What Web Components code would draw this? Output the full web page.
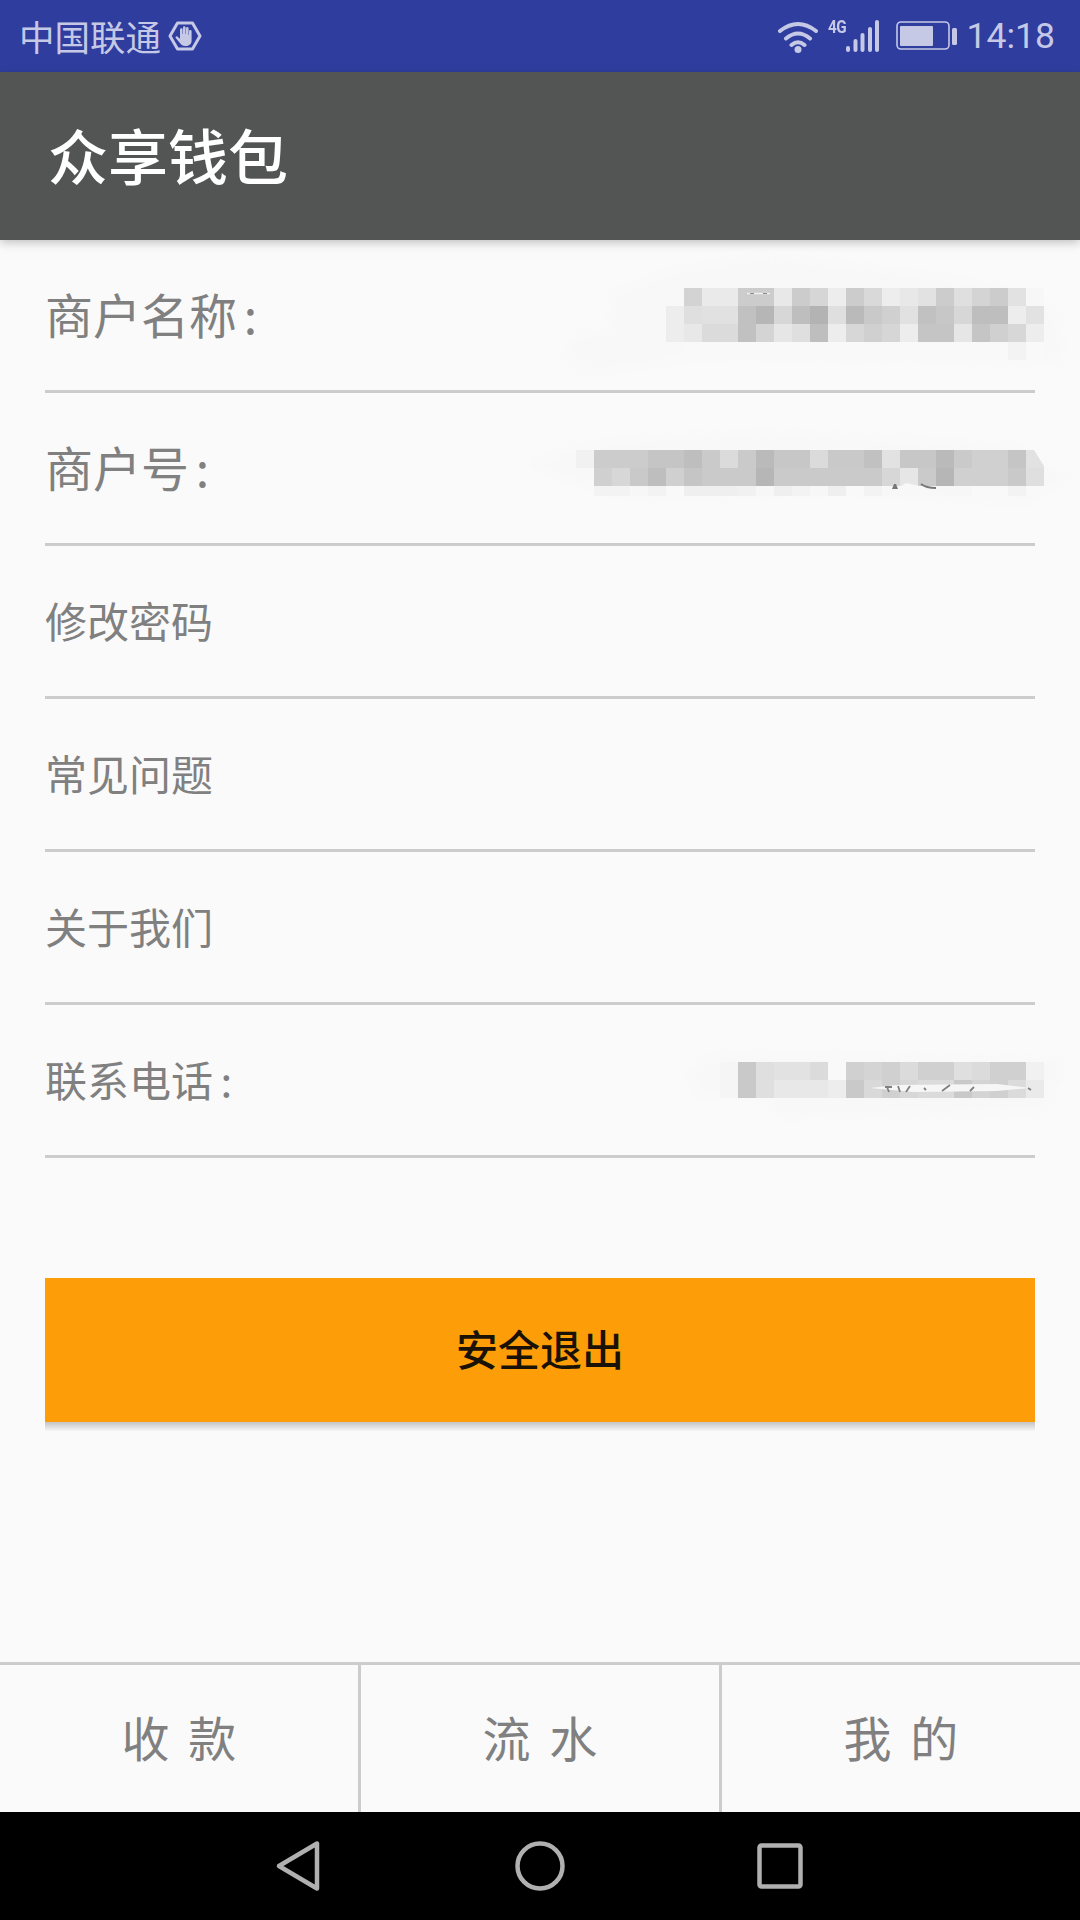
<!DOCTYPE html>
<html lang="zh-CN">
<head>
<meta charset="utf-8">
<title>众享钱包</title>
<style>
  html, body { margin: 0; padding: 0; background: #fafafa; }
  body { font-family: "Noto Sans CJK SC", "Noto Sans", sans-serif; }
</style>
</head>
<body>
<wallet-page>
  <status-bar></status-bar>
  <app-bar>众享钱包</app-bar>
  <info-list>
    <info-row large>
      商户名称 :
      <pixel-blur slot="value" top="48" right="-9" width="378" height="72"
        cells="-- cf e8 e8 c8 c8 e6 c8 d2 eb c8 d6 ec e6 e0 c8 dc d0 c8 df f6/ec dc de de bc b0 d4 b8 ac dc b4 c4 cc de bc c2 d4 b8 b8 ec e0/ec e6 d8 d8 bc d0 e4 dc b8 eb d4 cc d2 ec c0 c0 e4 c0 cc d4 ec/-- f8 f8 f8 f8 f8 f8 f8 f8 f8 f8 f8 f8 f8 f8 f8 f8 f8 f8 f2 f8"
        smear="M8 -18L97 -32L229 -18L318 -5L390 22L397 62L390 75L283 72L33 69L-75 85L-101 69L-92 49L-57 42L-53 5Z">
        <svg slot="marks" viewBox="0 0 378 72" width="378" height="72" style="display:block">
          <path d="M81 5.5L104 5.5" stroke="#f2f2f2" stroke-width="1.4"/>
          <path d="M84 5.5L88 5.5M97 5.5L101 5.5" stroke="#8a8a8a" stroke-width="1"/>
        </svg>
      </pixel-blur>
    </info-row>
    <info-row large>
      商户号 :
      <pixel-blur slot="value" top="57" right="-9" width="468" height="46"
        cells="f0 c8 c8 c8 c0 c0 b8 c6 d8 c6 b4 c2 c2 d8 c4 c4 bc e0 c2 c2 b4 c6 cc cc c0 e0/-- cc d4 c4 b8 cc c0 c6 c6 c6 b0 c6 c6 c6 c6 c6 c6 d4 e4 c6 b0 cc cc cc c4 dc/-- f2 f2 f6 f2 f8 ee ee ee f0 f6 ee f2 f6 ee f8 f2 f6 f6 f8 f6 f6 f8 f8 f2 f8"
        smear="M-45 13L1 -3L69 -13L194 -18L301 -13L444 -3L490 27L451 53L301 43L51 47L-20 27Z">
        <svg slot="marks" viewBox="0 0 468 46" width="468" height="46" style="display:block">
          <path d="M458 0L468 0L468 16Z" fill="#fafafa"/>
          <path d="M310 46L330 33L362 40L372 46Z" fill="#f8f8f8"/>
          <path d="M316 39L322 39L320 34L318 34Z" fill="#777"/>
          <path d="M345 34Q350 38 360 38" stroke="#777" stroke-width="2" fill="none"/>
        </svg>
      </pixel-blur>
    </info-row>
    <info-row>修改密码</info-row>
    <info-row>常见问题</info-row>
    <info-row>关于我们</info-row>
    <info-row>
      联系电话 :
      <pixel-blur slot="value" top="57" right="-9" width="324" height="36"
        cells="f4 c4 dc e0 e0 d8 f8 cc d0 cc d8 cc cc dc d8 cc cc f0/f4 c4 dc e6 e6 e6 ec c4 d6 cc d4 d8 d8 c4 d0 cc d8 e8"
        smear="M-33 11L0 -9L340 -2L340 15L320 51L60 55L43 35L-20 35Z">
        <svg slot="marks" viewBox="0 0 324 36" width="324" height="36" style="display:block">
          <path d="M150 26L177 23L277 22L310 26L277 29L193 30Z" fill="#f6f6f6"/>
          <path d="M165 25L172 25M167 25L169 30M178 24L180 30M186 30L190 24M204 26L206 28M222 29L230 23M250 29L254 25M308 26L311 28" stroke="#808080" stroke-width="1.8" fill="none"/>
        </svg>
      </pixel-blur>
    </info-row>
  </info-list>
  <exit-button>安全退出</exit-button>
  <tab-bar>
    <tab-item>收 款</tab-item>
    <tab-item>流 水</tab-item>
    <tab-item>我 的</tab-item>
  </tab-bar>
  <nav-bar></nav-bar>
</wallet-page>

<script>
class WalletPage extends HTMLElement {
  connectedCallback() {
    this.attachShadow({ mode: 'open' });
    this.shadowRoot.innerHTML = `
      <style>
        :host {
          display: flex;
          flex-direction: column;
          width: 1080px;
          height: 1920px;
          overflow: hidden;
          background: #fafafa;
        }
      </style>
      <slot></slot>
    `;
  }
}

class StatusBar extends HTMLElement {
  connectedCallback() {
    this.attachShadow({ mode: 'open' });
    this.shadowRoot.innerHTML = `
      <style>
        :host {
          display: flex;
          align-items: center;
          flex: none;
          height: 72px;
          padding: 0 25px 0 19px;
          background: #2f3d9e;
          color: #c5c9e6;
          box-sizing: border-box;
        }
        .carrier {
          font: 35.5px/72px "Noto Sans CJK SC", sans-serif;
        }
        .badge { margin-left: 7px; }
        .right {
          display: flex;
          align-items: center;
          margin-left: auto;
        }
        .net {
          position: relative;
          width: 52px;
          height: 32px;
          margin-left: 10px;
        }
        .net b {
          position: absolute;
          left: 0;
          top: -2px;
          font: 700 18px/18px "Roboto", sans-serif;
          letter-spacing: -0.5px;
          transform: scaleX(0.85);
          transform-origin: left;
        }
        .time {
          margin-left: 9px;
          font: 35.5px/72px "Roboto", sans-serif;
        }
        svg { display: block; }
      </style>
      <span class="carrier">中国联通</span>
      <svg class="badge" width="34" height="30" viewBox="0 0 34 30">
        <path d="M9.5 2H24.5L32 15L24.5 28H9.5L2 15Z" fill="none" stroke="#c5c9e6" stroke-width="3" stroke-linejoin="round"/>
        <path d="M12 14V8.600a1.300 1.300 0 0 1 2.600 0V13h.4V6.600a1.300 1.300 0 0 1 2.600 0V13h.4V7.400a1.300 1.300 0 0 1 2.600 0V14h.4v-3.800a1.300 1.300 0 0 1 2.600 0V19.500c0 3.200-2.200 5.500-5.500 5.500h-1.200c-2.200 0-3.500-.9-4.600-2.500L7.700 17c-.6-1 .7-2.300 1.900-1.300L12 17.800Z" fill="#c5c9e6"/>
      </svg>
      <div class="right">
        <svg width="40" height="33" viewBox="0 0 40 33">
          <path d="M2 11Q20 -3 38 11M8 18.500Q20 8.500 32 18.500M13.500 25Q20 19.500 26.500 25" fill="none" stroke="#c5c9e6" stroke-width="4" stroke-linecap="round"/>
          <circle cx="20" cy="29.500" r="3.500" fill="#c5c9e6"/>
        </svg>
        <div class="net">
          <b>4G</b>
          <svg width="52" height="32" viewBox="0 0 52 32">
            <rect x="18" y="26" width="4" height="6" rx="2" fill="#c5c9e6"/>
            <rect x="25.500" y="19" width="4" height="13" rx="2" fill="#c5c9e6"/>
            <rect x="32.500" y="13" width="4" height="19" rx="2" fill="#c5c9e6"/>
            <rect x="40" y="7" width="4" height="25" rx="2" fill="#c5c9e6"/>
            <rect x="47" y="0" width="4" height="32" rx="2" fill="#c5c9e6"/>
          </svg>
        </div>
        <svg width="62" height="30" viewBox="0 0 62 30" style="margin-left:16px">
          <rect x="1" y="1" width="52" height="27" rx="4" fill="none" stroke="#c5c9e6" stroke-width="1.600"/>
          <rect x="4" y="5" width="33" height="20" rx="1" fill="#c5c9e6"/>
          <rect x="56" y="7" width="5" height="17" rx="1.500" fill="#c5c9e6"/>
        </svg>
        <span class="time">14:18</span>
      </div>
    `;
  }
}

class AppBar extends HTMLElement {
  connectedCallback() {
    this.attachShadow({ mode: 'open' });
    this.shadowRoot.innerHTML = `
      <style>
        :host {
          display: flex;
          align-items: center;
          flex: none;
          position: relative;
          height: 168px;
          padding: 0 0 5px 48px;
          box-sizing: border-box;
          background: #535554;
          color: #fff;
          font: 500 60px/1 "Noto Sans CJK SC", sans-serif;
          box-shadow: 0 3px 9px rgba(0, 0, 0, 0.22);
        }
      </style>
      <slot></slot>
    `;
  }
}

class InfoList extends HTMLElement {
  connectedCallback() {
    this.attachShadow({ mode: 'open' });
    this.shadowRoot.innerHTML = `
      <style>
        :host {
          display: block;
          flex: none;
          padding: 0 45px;
        }
      </style>
      <slot></slot>
    `;
  }
}

class InfoRow extends HTMLElement {
  connectedCallback() {
    this.attachShadow({ mode: 'open' });
    this.shadowRoot.innerHTML = `
      <style>
        :host {
          display: flex;
          align-items: center;
          justify-content: space-between;
          position: relative;
          height: 153px;
          padding-bottom: 2px;
          box-sizing: border-box;
          border-bottom: 3px solid #cccccc;
          color: #808080;
          font: 42px/1 "Noto Sans CJK SC", sans-serif;
          word-spacing: -2px;
        }
        :host([large]) {
          padding-bottom: 5px;
          font-size: 48px;
          word-spacing: -4px;
        }
        .label { white-space: nowrap; }
      </style>
      <span class="label"><slot></slot></span>
      <slot name="value"></slot>
    `;
  }
}

// mosaic over a hidden value, cells are gray levels in hex, rows split by "/"
class PixelBlur extends HTMLElement {
  connectedCallback() {
    const w = this.getAttribute('width');
    const h = this.getAttribute('height');
    const rows = this.getAttribute('cells').split('/');
    let rects = '';
    rows.forEach((row, y) => {
      row.trim().split(/\s+/).forEach((c, x) => {
        if (c === '--') return;
        const hh = Math.min(18, h - y * 18);
        rects += `<rect x="${x * 18}" y="${y * 18}" width="18" height="${hh}" fill="#${c}${c}${c}" opacity="0.92"/>`;
      });
    });
    this.attachShadow({ mode: 'open' });
    this.shadowRoot.innerHTML = `
      <style>
        :host {
          display: block;
          flex: none;
          position: absolute;
          right: ${this.getAttribute('right')}px;
          top: ${this.getAttribute('top')}px;
          width: ${w}px;
          height: ${h}px;
        }
        svg.cells { display: block; overflow: visible; }
        .smear { filter: blur(3px); }
        ::slotted(svg) { position: absolute; left: 0; top: 0; }
      </style>
      <svg class="cells" width="${w}" height="${h}" viewBox="0 0 ${w} ${h}" shape-rendering="crispEdges">
        <path class="smear" d="${this.getAttribute('smear')}" fill="#f8f8f8" shape-rendering="auto"/>
        ${rects}
      </svg>
      <slot name="marks"></slot>
    `;
  }
}

class ExitButton extends HTMLElement {
  connectedCallback() {
    this.attachShadow({ mode: 'open' });
    this.shadowRoot.innerHTML = `
      <style>
        :host {
          display: flex;
          align-items: center;
          justify-content: center;
          flex: none;
          position: relative;
          height: 144px;
          margin: 120px 45px 0;
          padding-bottom: 5px;
          box-sizing: border-box;
          background: #fd9d08;
          color: #1a1206;
          font: 500 42px/1 "Noto Sans CJK SC", sans-serif;
        }
        .shade {
          position: absolute;
          left: 0;
          right: 0;
          top: 100%;
          height: 9px;
          background: linear-gradient(#c4c4c4, #f6f6f6);
        }
      </style>
      <slot></slot>
      <div class="shade"></div>
    `;
  }
}

class TabBar extends HTMLElement {
  connectedCallback() {
    this.attachShadow({ mode: 'open' });
    this.shadowRoot.innerHTML = `
      <style>
        :host {
          display: grid;
          grid-template-columns: 361px 361px 1fr;
          flex: none;
          height: 150px;
          margin-top: auto;
          border-top: 3px solid #cccccc;
          box-sizing: border-box;
        }
      </style>
      <slot></slot>
    `;
  }
}

class TabItem extends HTMLElement {
  connectedCallback() {
    this.attachShadow({ mode: 'open' });
    this.shadowRoot.innerHTML = `
      <style>
        :host {
          display: flex;
          align-items: center;
          justify-content: center;
          padding: 0 0 5px 2px;
          box-sizing: border-box;
          color: #808080;
          font: 48px/1 "Noto Sans CJK SC", sans-serif;
          letter-spacing: 2px;
          word-spacing: 4px;
          border-right: 3px solid #cccccc;
        }
        :host(:last-child) { border-right: 0; }
      </style>
      <slot></slot>
    `;
  }
}

class NavBar extends HTMLElement {
  connectedCallback() {
    this.attachShadow({ mode: 'open' });
    this.shadowRoot.innerHTML = `
      <style>
        :host {
          display: flex;
          align-items: center;
          justify-content: center;
          gap: 192px;
          flex: none;
          height: 108px;
          padding-right: 2px;
          background: #000;
        }
        svg { display: block; }
      </style>
      <svg width="48" height="52" viewBox="0 0 48 52">
        <path d="M4 26L42 3.500V48.500Z" fill="none" stroke="#b0b0b0" stroke-width="4.500" stroke-linejoin="round"/>
      </svg>
      <svg width="50" height="50" viewBox="0 0 50 50">
        <circle cx="25" cy="25" r="22.500" fill="none" stroke="#b0b0b0" stroke-width="4.500"/>
      </svg>
      <svg width="46" height="46" viewBox="0 0 46 46">
        <rect x="2.500" y="2.500" width="41" height="41" rx="2" fill="none" stroke="#b0b0b0" stroke-width="4.500"/>
      </svg>
    `;
  }
}

customElements.define('wallet-page', WalletPage);
customElements.define('status-bar', StatusBar);
customElements.define('app-bar', AppBar);
customElements.define('info-list', InfoList);
customElements.define('info-row', InfoRow);
customElements.define('pixel-blur', PixelBlur);
customElements.define('exit-button', ExitButton);
customElements.define('tab-bar', TabBar);
customElements.define('tab-item', TabItem);
customElements.define('nav-bar', NavBar);
</script>
</body>
</html>
